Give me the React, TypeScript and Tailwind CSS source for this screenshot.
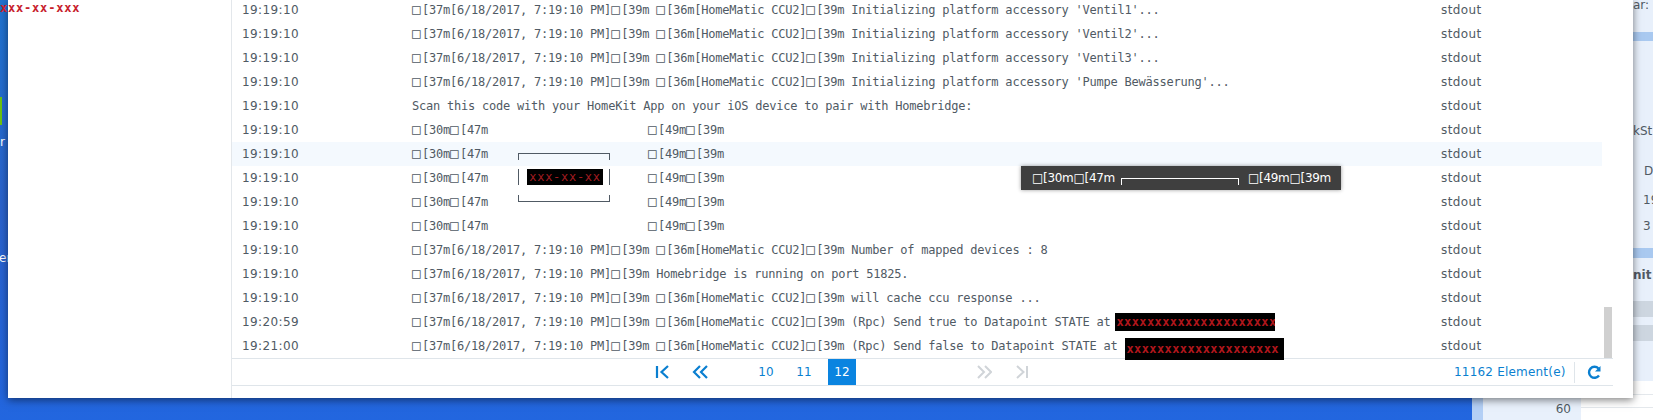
import React from 'react';

const prefix = '□[37m[6/18/2017, 7:19:10 PM]□[39m □[36m[HomeMatic CCU2]□[39m ';

type Row = {
  time: string;
  msg?: string;
  qr?: boolean;
  secret?: string;
  secretClass?: string;
};

const rows: Row[] = [
  { time: '19:19:10', msg: prefix + "Initializing platform accessory 'Ventil1'..." },
  { time: '19:19:10', msg: prefix + "Initializing platform accessory 'Ventil2'..." },
  { time: '19:19:10', msg: prefix + "Initializing platform accessory 'Ventil3'..." },
  { time: '19:19:10', msg: prefix + "Initializing platform accessory 'Pumpe Bewässerung'..." },
  { time: '19:19:10', msg: 'Scan this code with your HomeKit App on your iOS device to pair with Homebridge:' },
  { time: '19:19:10', qr: true },
  { time: '19:19:10', qr: true },
  { time: '19:19:10', qr: true },
  { time: '19:19:10', qr: true },
  { time: '19:19:10', qr: true },
  { time: '19:19:10', msg: prefix + 'Number of mapped devices : 8' },
  { time: '19:19:10', msg: '□[37m[6/18/2017, 7:19:10 PM]□[39m Homebridge is running on port 51825.' },
  { time: '19:19:10', msg: prefix + 'will cache ccu response ...' },
  {
    time: '19:20:59',
    msg: prefix + '(Rpc) Send true to Datapoint STATE at ',
    secret: 'xxxxxxxxxxxxxxxxxxxxx',
    secretClass: 'w-[160px] h-[18px] -ml-[2px]',
  },
  {
    time: '19:21:00',
    msg: prefix + '(Rpc) Send false to Datapoint STATE at ',
    secret: 'xxxxxxxxxxxxxxxxxxxx',
    secretClass: 'w-[159px] h-[22px] translate-y-[3px] ml-[1px]',
  },
];

// the escape char shows up as a box that is wider than the other letters
const Ansi: React.FC<{ text: string }> = ({ text }) => (
  <span>
    {text.split('□').map((part, i) => (
      <React.Fragment key={i}>
        {i > 0 && <span className="inline-block w-[10px] text-[14px] leading-none">□</span>}
        {part}
      </React.Fragment>
    ))}
  </span>
);

const LogRow: React.FC<{ row: Row; hovered: boolean }> = ({ row, hovered }) => (
  <div className={`flex h-6 items-center text-[12px] text-[#505a64] ${hovered ? 'bg-[#f4f9fe]' : ''}`}>
    <div className="w-[180px] shrink-0 pl-[10px] tracking-[0.4px]">{row.time}</div>
    <div className="flex w-[1029px] shrink-0 items-center whitespace-pre font-['DejaVu_Sans_Mono',monospace] text-[12px] tracking-[-0.22px]">
      {row.qr ? (
        <>
          <span className="w-[236px]">
            <Ansi text="□[30m□[47m" />
          </span>
          <Ansi text="□[49m□[39m" />
        </>
      ) : (
        <Ansi text={row.msg ?? ''} />
      )}
      {row.secret && (
        <span
          className={`flex items-center overflow-hidden bg-black pl-[1px] text-[12px] font-bold tracking-[0.4px] text-[#b0161c] ${row.secretClass}`}
        >
          {row.secret}
        </span>
      )}
    </div>
    <div className="tracking-[0.4px]">stdout</div>
  </div>
);

const PagerIcon: React.FC<{ kind: 'first' | 'prev' | 'next' | 'last'; active: boolean }> = ({ kind, active }) => {
  const color = active ? '#0a7fd0' : '#d0d4d8';
  const paths = {
    first: 'M2 2v12M13 2 6.500 8l6.500 6',
    prev: 'M8 2 2 8l6 6M15 2 9 8l6 6',
    next: 'M2 2l6 6-6 6M9 2l6 6-6 6',
    last: 'M3 2l6.500 6L3 14M13 2v12',
  };
  return (
    <svg width="16" height="16" viewBox="0 0 16 16" fill="none" stroke={color} strokeWidth={active ? 2.2 : 2}>
      <path d={paths[kind]} />
    </svg>
  );
};

export default function App() {
  return (
    <div className="relative h-[420px] w-[1653px] overflow-hidden bg-gradient-to-b from-[#1f73cf] via-[#2a62cc] to-[#2266df] font-['DejaVu_Sans',sans-serif] text-[12px]">
      {/* desktop icons peeking out on the left */}
      <div className="absolute left-0 top-0 flex h-[398px] w-[8px] flex-col overflow-hidden whitespace-nowrap text-white">
        <div className="mt-[97px] h-[28px] w-[2px] shrink-0 bg-[#6cc40f]" />
        <div className="mt-[8px] h-[18px] shrink-0">r</div>
        <div className="-ml-[1px] mt-[98px] h-[18px] shrink-0">er</div>
      </div>

      {/* app sitting behind the log window */}
      <div className="absolute right-0 top-0 flex h-[381px] w-[20px] flex-col overflow-hidden whitespace-nowrap bg-[#e8f0fb] text-[#505a64]">
        <div className="h-[32px] shrink-0 leading-[10px]">ar:</div>
        <div className="h-[9px] shrink-0 bg-[#a9c9f0]" />
        <div className="mt-[81px] h-[18px] shrink-0">kSt</div>
        <div className="mt-[22px] h-[18px] shrink-0 pl-[11px]">D</div>
        <div className="mt-[11px] h-[18px] shrink-0 pl-[10px]">19</div>
        <div className="mt-[8px] h-[18px] shrink-0 pl-[10px]">3</div>
        <div className="mt-[13px] h-[10px] shrink-0 bg-[#a9c9f0]" />
        <div className="mt-[8px] h-[18px] shrink-0 font-bold">nit</div>
        <div className="mt-[17px] h-[16px] shrink-0 bg-[#cdd6e0]" />
        <div className="mt-[8px] h-[16px] shrink-0 bg-[#cdd6e0]" />
      </div>
      <div className="absolute bottom-0 left-[1472px] right-0 flex h-[39px] text-[#505a64]">
        <div className="w-[11px] bg-[#b3cff5]" />
        <div className="w-[98px] bg-[#e8f0fb] pr-[10px] pt-[19px] text-right leading-[18px]">
          <div>60</div>
          <div>40</div>
        </div>
        <div className="flex-1 bg-white">
          <div className="h-[14px] border-b border-[#e4e8ec]" />
          <div className="h-[13px] border-b border-[#e4e8ec]" />
        </div>
      </div>

      {/* log window */}
      <div className="absolute left-[8px] top-0 flex h-[398px] w-[1625px] bg-white shadow-[0_2px_8px_rgba(0,0,0,0.5)]">
        <div className="w-[224px] shrink-0 border-r border-[#e3e7eb]" />
        <div className="relative min-w-0 flex-1 overflow-hidden">
          <div className="mt-[-2px] w-[1370px]">
            {rows.map((row, i) => (
              <LogRow key={i} row={row} hovered={i === 6} />
            ))}

            {/* pager */}
            <div className="flex h-[28px] w-[1381px] items-center border-b border-t border-[#dfe5ea] text-[#0a7fd0]">
              <div className="ml-[423px] flex w-[16px] justify-center">
                <PagerIcon kind="first" active />
              </div>
              <div className="ml-[21px] flex w-[16px] justify-center">
                <PagerIcon kind="prev" active />
              </div>
              <div className="ml-[44px] flex w-[28px] justify-center">10</div>
              <div className="ml-[10px] flex w-[28px] justify-center">11</div>
              <div className="ml-[10px] flex h-[26px] w-[28px] items-center justify-center bg-[#0a84e0] text-white">12</div>
              <div className="ml-[120px] flex w-[16px] justify-center">
                <PagerIcon kind="next" active={false} />
              </div>
              <div className="ml-[22px] flex w-[16px] justify-center">
                <PagerIcon kind="last" active={false} />
              </div>
              <div className="ml-[424px] flex h-[21px] w-[121px] items-center whitespace-nowrap border-r border-[#dfe5ea] tracking-[0.2px]">
                11162 Element(e)
              </div>
              <div className="ml-[11px]">
                <svg width="16" height="16" viewBox="0 0 16 16" fill="none" stroke="#0a7fd0" strokeWidth="2.4">
                  <path d="M13 11.500A5.500 5.500 0 1 1 12.500 4.500" />
                  <path d="M14.500 2v5.500H9z" fill="#0a7fd0" stroke="none" />
                </svg>
              </div>
            </div>
          </div>

          {/* scrollbar */}
          <div className="absolute left-[1372px] top-[307px] h-[51px] w-[8px] bg-[#d0d0d0]" />

          {/* redacted QR code sitting over the rows */}
          <div className="absolute left-[286px] top-[153px] flex w-[92px] flex-col">
            <div className="h-[7px] border-x border-t border-[#505a64]" />
            <div className="mt-[9px] flex h-[16px] border-x border-[#505a64] pl-[8px]">
              <div className="flex w-[76px] items-center justify-center bg-black font-['DejaVu_Sans_Mono',monospace] tracking-[0.7px] text-[#a31c20]">
                xxx-xx-xx
              </div>
            </div>
            <div className="mt-[10px] h-[7px] border-x border-b border-[#505a64]" />
          </div>

          {/* tooltip */}
          <div className="absolute left-[789px] top-[166px] flex h-[24px] w-[320px] items-center whitespace-pre bg-[#3f3f3f] pl-[11px] tracking-[-0.3px] text-white shadow-[0_0_4px_rgba(0,0,0,0.4)]">
            <span className="w-[89px]">□[30m□[47m</span>
            <span className="mt-[7px] h-[7px] w-[118px] border-x border-t border-white" />
            <span className="ml-[9px]">□[49m□[39m</span>
          </div>
        </div>
      </div>

      {/* redacted text pasted over the screenshot */}
      <div className="absolute left-0 top-0 font-['DejaVu_Sans_Mono',monospace] font-bold leading-[17px] tracking-[0.8px] text-[#c81e2c]">
        xxx-xx-xxx
      </div>
    </div>
  );
}
